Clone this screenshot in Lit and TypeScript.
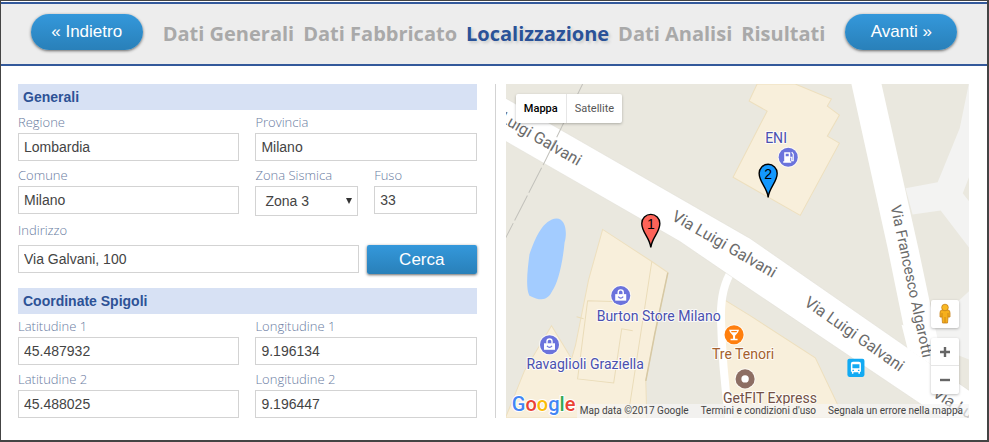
import { LitElement, html, svg, css } from "lit";
import { customElement, property, state } from "lit/decorators.js";
import { classMap } from "lit/directives/class-map.js";

const buttonStyles = css`
  .primary {
    border: 0;
    padding: 0;
    color: #fff;
    font: 17px "Liberation Sans", Arial, sans-serif;
    background: linear-gradient(#3498db, #2980b9);
    box-shadow: 0 1px 3px #666;
    cursor: pointer;
  }
`;

@customElement("wizard-header")
class WizardHeader extends LitElement {
  @property({ type: Number }) current = 2;

  private steps = ["Dati Generali", "Dati Fabbricato", "Localizzazione", "Dati Analisi", "Risultati"];

  static styles = [
    buttonStyles,
    css`
      :host {
        display: flex;
        align-items: center;
        justify-content: center;
        gap: 20px;
        box-sizing: border-box;
        height: 64px;
        padding-bottom: 4px;
        border-top: 2px solid #33599b;
        border-bottom: 2px solid #33599b;
        background: #ededed;
      }
      .primary {
        width: 112px;
        height: 36px;
        border-radius: 18px;
      }
      nav {
        display: flex;
        gap: 9px;
        padding-top: 4px;
      }
      .step {
        color: #a9a9a9;
        font: bold 20px/28px "Open Sans", "Noto Sans", sans-serif;
        text-decoration: none;
        white-space: nowrap;
      }
      .current {
        color: #2a5298;
        text-shadow: 2px 2px 3px #ccc;
      }
    `,
  ];

  render() {
    return html`
      <button class="primary">« Indietro</button>
      <nav>
        ${this.steps.map(
          (s, i) => html`<a href="#" class=${classMap({ step: true, current: i === this.current })}>${s}</a>`
        )}
      </nav>
      <button class="primary">Avanti »</button>
    `;
  }
}

@customElement("location-form")
class LocationForm extends LitElement {
  static styles = [
    buttonStyles,
    css`
      :host {
        display: block;
      }
      h2 {
        margin: 0 0 5px;
        padding-left: 5px;
        background: #d7e1f4;
        color: #2d5296;
        font: bold 14px/26px "Liberation Sans", Arial, sans-serif;
      }
      .grid {
        display: grid;
        grid-template-columns: 1fr 1fr;
        gap: 7px 16px;
      }
      .pair {
        display: grid;
        grid-template-columns: 1fr 1fr;
        gap: 16px;
      }
      .field {
        display: flex;
        flex-direction: column;
        gap: 4px;
        min-width: 0;
      }
      label {
        color: #6a7c9f;
        font: 300 13px/14px "Open Sans", "Noto Sans", sans-serif;
      }
      input,
      select {
        box-sizing: border-box;
        width: 100%;
        height: 28px;
        border: 1px solid #d3d3d3;
        border-radius: 0;
        padding: 0 5px;
        background: #fff;
        color: #444;
        font: 14px "Liberation Sans", Arial, sans-serif;
      }
      select {
        appearance: none;
        height: 30px;
        padding: 0 9px;
      }
      .select {
        position: relative;
      }
      .arrow {
        position: absolute;
        right: 6px;
        top: 12px;
        border: 3px solid transparent;
        border-top: 6px solid #333;
        border-bottom: 0;
        pointer-events: none;
      }
      .address {
        display: flex;
        flex-direction: column;
        gap: 8px;
        margin: 7px 0 14px;
      }
      .search {
        display: grid;
        grid-template-columns: 1fr 24%;
        gap: 8px;
      }
      .search .primary {
        height: 29px;
        border-radius: 2px;
      }
    `,
  ];

  private field(id: string, label: string, value: string) {
    return html`<div class="field"><label for=${id}>${label}</label><input id=${id} .value=${value} /></div>`;
  }

  render() {
    return html`
      <h2>Generali</h2>
      <div class="grid">
        ${this.field("regione", "Regione", "Lombardia")} ${this.field("provincia", "Provincia", "Milano")}
        ${this.field("comune", "Comune", "Milano")}
        <div class="pair">
          <div class="field">
            <label for="zona">Zona Sismica</label>
            <div class="select">
              <select id="zona">
                <option>Zona 1</option>
                <option>Zona 2</option>
                <option selected>Zona 3</option>
                <option>Zona 4</option>
              </select>
              <span class="arrow"></span>
            </div>
          </div>
          ${this.field("fuso", "Fuso", "33")}
        </div>
      </div>
      <div class="address">
        <label for="indirizzo">Indirizzo</label>
        <div class="search">
          <input id="indirizzo" .value=${"Via Galvani, 100"} />
          <button class="primary">Cerca</button>
        </div>
      </div>
      <h2>Coordinate Spigoli</h2>
      <div class="grid">
        ${this.field("lat1", "Latitudine 1", "45.487932")} ${this.field("lng1", "Longitudine 1", "9.196134")}
        ${this.field("lat2", "Latitudine 2", "45.488025")} ${this.field("lng2", "Longitudine 2", "9.196447")}
      </div>
    `;
  }
}

const pin = (x: number, y: number, label: string, fill: string) => svg`
  <g transform="translate(${x} ${y})">
    <path d="M0 0C-1 -10 -9 -15 -9 -24A9 9 0 0 1 9 -24C9 -15 1 -10 0 0Z" fill=${fill} stroke="#000" stroke-width="1.4"/>
    <text class="pin" y="-18">${label}</text>
  </g>`;

const disc = (x: number, y: number, fill: string, glyph: unknown) => svg`
  <g transform="translate(${x} ${y})">
    <circle r="10.5" fill="#fff" opacity=".7"/>
    <circle r="9.5" fill=${fill}/>
    ${glyph}
  </g>`;

const bag = () => svg`
  <path d="M-5.5 -1.5H5.5V5H-5.5Z" fill="#fff"/>
  <path d="M-2.5 -1V-3.2A2.5 2.5 0 0 1 2.5 -3.2V-1" fill="none" stroke="#fff" stroke-width="1.4"/>
  <path d="M-2.5 1Q0 4 2.5 1" fill="none" stroke="#6b73dc" stroke-width="1.2"/>`;

@customElement("street-map")
class StreetMap extends LitElement {
  @state() private mode = "Mappa";

  static styles = css`
    :host {
      display: block;
      position: relative;
      overflow: hidden;
      background: #eae8df;
      font-family: Roboto, sans-serif;
    }
    .canvas {
      position: absolute;
      inset: 0;
      width: 100%;
      height: 100%;
    }
    .road {
      font-size: 16px;
      fill: #6b6b6b;
    }
    .side {
      font-size: 15px;
    }
    .poi {
      font-size: 14px;
      stroke: #fff;
      stroke-width: 2px;
      stroke-opacity: 0.8;
      stroke-linejoin: round;
      paint-order: stroke;
    }
    .shop {
      fill: #4a50b0;
    }
    .bar {
      fill: #a5612e;
    }
    .gym {
      fill: #735145;
    }
    .pin {
      font: 14px "Liberation Sans", Arial, sans-serif;
      text-anchor: middle;
    }
    .logo {
      position: absolute;
      left: 6px;
      bottom: 2px;
      font: 500 20px/24px Roboto, sans-serif;
      text-decoration: none;
      -webkit-text-stroke: 2px #fff;
      paint-order: stroke;
    }
    .blue {
      color: #4285f4;
    }
    .red {
      color: #ea4335;
    }
    .yellow {
      color: #fbbc05;
    }
    .green {
      color: #34a853;
    }
    .types {
      position: absolute;
      left: 10px;
      top: 10px;
      display: flex;
      border-radius: 2px;
      background: #fff;
      box-shadow: 0 1px 3px #0004;
    }
    .types button {
      border: 0;
      padding: 0 8px;
      height: 29px;
      background: none;
      color: #565656;
      font: 11px Roboto, sans-serif;
    }
    .types button + button {
      border-left: 1px solid #e6e6e6;
    }
    .types .active {
      color: #000;
      font-weight: 500;
    }
    .controls {
      position: absolute;
      right: 10px;
      bottom: 24px;
      display: flex;
      flex-direction: column;
      gap: 10px;
    }
    .box {
      display: flex;
      flex-direction: column;
      border-radius: 2px;
      background: #fff;
      box-shadow: 0 1px 3px #0004;
    }
    .box button {
      display: grid;
      place-items: center;
      width: 28px;
      height: 28px;
      border: 0;
      padding: 0;
      background: none;
    }
    .box button + button {
      box-shadow: 0 -1px #e6e6e6;
    }
    .legal {
      position: absolute;
      right: 0;
      bottom: 0;
      display: flex;
      gap: 12px;
      padding: 0 6px 0 3px;
      background: #f5f5f5b3;
      color: #444;
      font-size: 10px;
      line-height: 14px;
      white-space: nowrap;
    }
    .legal a {
      color: inherit;
      text-decoration: none;
    }
  `;

  render() {
    return html`
      <svg class="canvas" viewBox="0 0 463 333" preserveAspectRatio="xMidYMid slice" role="img" aria-label="Via Luigi Galvani, Milano">
        <g fill="#f3f3f2">
          <path d="M462 0H463V91L456 109L463 118V164L434 126L406 130L399 104L431 98L453 44Z" />
          <path d="M463 206L452 216L424 240L430 262L463 275Z" />
        </g>
        <g fill="#f8efdb" stroke="#eddfbe">
          <path d="M251 0L243 17L261 27L227 93L294 131L333 59L321 52L333 31L321 22L325 15L289 0Z" />
          <path d="M97 145L83 195L70 260L66 274L46 241L19 286L11 306L0 333H141L140 296L149 249L162 188L146 177Z" />
          <path d="M218 215L244 231L309 273L331 319L340 333H218Z" />
        </g>
        <path d="M146 177L122 333M71 232L78 234M82 216L115 217M82 216L72 294L108 298L116 244L127 246" fill="none" stroke="#eadcb9" />
        <path d="M162 188L149 249L140 296" fill="none" stroke="#d6c8a4" stroke-width="1.5" />
        <path d="M51 134C60 134 62 148 59 158C57 180 52 199 47 206C42 216 36 217 24 211C20 204 22 185 24 170C30 152 38 135 51 134Z" fill="#a3ccff" />
        <path d="M226 186Q214 204 215 235Q216 280 223 333" fill="none" stroke="#fff" stroke-width="8" />
        <path d="M345 0H375L412 165L434 269L402 266L381 163Z" fill="#fff" />
        <path d="M0 14L244 154L401 263L463 306V333H436L414 319L234 198L174 157L0 57Z" fill="#fff" stroke="#dedcd4" stroke-width=".5" />
        <path d="M395 240L430 252L438 289L401 264Z" fill="#fff" />
        <path d="M77 0L40 76L0 154" fill="none" stroke="#c2c1bb" stroke-dasharray="28 3" />
        <g class="road">
          <text transform="translate(72 82) rotate(30)" text-anchor="end">Via Luigi Galvani</text>
          <text transform="translate(165 135) rotate(30)">Via Luigi Galvani</text>
          <text transform="translate(297 220) rotate(35)">Via Luigi Galvani</text>
          <text class="side" transform="translate(384 122) rotate(78)">Via Francesco Algarotti</text>
          <text transform="translate(425 311) rotate(32)">Via Luigi Galvani</text>
        </g>
        ${disc(
          282, 73, "#6b73dc",
          svg`<path d="M-4 -5H2V4H3V5.5H-5V4H-4ZM-2.5 -3.5V-1H.5V-3.5Z" fill="#fff" fill-rule="evenodd"/>
              <path d="M2 0H3.5V3.5H5V-3L3.5 -5" fill="none" stroke="#fff" stroke-width="1.1"/>`
        )}
        ${disc(115, 211, "#6b73dc", bag())} ${disc(44, 260, "#6b73dc", bag())}
        ${disc(228, 250, "#ff7f0e", svg`<path d="M-5 -5H5L4 -2.5L1 1V4H3.5V5.5H-3.5V4H-1V1L-4 -2.5ZM-3 -3.7L-2.4 -2.5H2.4L3 -3.7Z" fill="#fff" fill-rule="evenodd"/>`)}
        ${disc(239, 294, "#8d6e63", svg`<circle r="3.7" fill="#fff"/>`)}
        <g transform="translate(349.500 283)">
          <rect x="-8.500" y="-9" width="17" height="18" rx="2" fill="#12aaf3" />
          <path d="M-5 -4Q-5 -6 -3 -6H3Q5 -6 5 -4V4H4V6H2.500V4.500H-2.500V6H-4V4H-5ZM-3.500 -3.500V.5H3.500V-3.500ZM-3.500 2V3.200H-2V2ZM2 2V3.200H3.500V2Z" fill="#fff" fill-rule="evenodd" />
        </g>
        <g class="poi">
          <text class="shop" x="259" y="59">ENI</text>
          <text class="shop" x="91" y="236">Burton Store Milano</text>
          <text class="shop" x="21" y="284">Ravaglioli Graziella</text>
          <text class="bar" x="206" y="274">Tre Tenori</text>
          <text class="gym" x="217" y="318">GetFIT Express</text>
        </g>
        ${pin(145, 163, "1", "#fd6358")} ${pin(262, 113, "2", "#1398fe")}
      </svg>
      <div class="types">
        ${["Mappa", "Satellite"].map(
          (m) => html`<button class=${classMap({ active: m === this.mode })} @click=${() => (this.mode = m)}>${m}</button>`
        )}
      </div>
      <div class="legal">
        <span>Map data ©2017 Google</span>
        <a href="#">Termini e condizioni d'uso</a>
        <a href="#">Segnala un errore nella mappa</a>
      </div>
      <a class="logo" href="#" aria-label="Google"
        ><span class="blue">G</span><span class="red">o</span><span class="yellow">o</span><span class="blue">g</span
        ><span class="green">l</span><span class="red">e</span></a
      >
      <div class="controls">
        <div class="box">
          <button aria-label="Street View">
            <svg width="12" height="22" viewBox="0 0 12 22">
              <path d="M3 7H9Q11 7 11 10V14H9L8.500 20H3.500L3 14H1V10Q1 7 3 7Z" fill="#f6b01c" stroke="#c7821a" stroke-width=".8" />
              <path d="M6 14V20M3 10V14M9 10V14" stroke="#c7821a" stroke-width=".8" />
              <circle cx="6" cy="4.500" r="3.300" fill="#f9b924" stroke="#c7821a" stroke-width=".8" />
            </svg>
          </button>
        </div>
        <div class="box">
          <button aria-label="Zoom avanti">
            <svg width="12" height="12"><path d="M1 6H11M6 1V11" stroke="#666" stroke-width="2.400" /></svg>
          </button>
          <button aria-label="Zoom indietro">
            <svg width="12" height="12"><path d="M1 6H11" stroke="#666" stroke-width="2.400" /></svg>
          </button>
        </div>
      </div>
    `;
  }
}

@customElement("app-root")
class AppRoot extends LitElement {
  static styles = css`
    :host {
      display: block;
      box-sizing: border-box;
      min-height: 100vh;
      border: 1px solid #444;
      border-width: 1px 2px 2px 1px;
      padding-top: 1px;
      background: #fff;
    }
    main {
      display: grid;
      grid-template-columns: minmax(0, 1.01fr) minmax(0, 1fr);
      padding: 18px 18px 22px 17px;
    }
    .form {
      padding-right: 18px;
      border-right: 1px solid #d3d3d3;
    }
    .map {
      margin-left: 10px;
    }
  `;

  render() {
    return html`
      <wizard-header .current=${2}></wizard-header>
      <main>
        <location-form class="form"></location-form>
        <street-map class="map"></street-map>
      </main>
    `;
  }
}
